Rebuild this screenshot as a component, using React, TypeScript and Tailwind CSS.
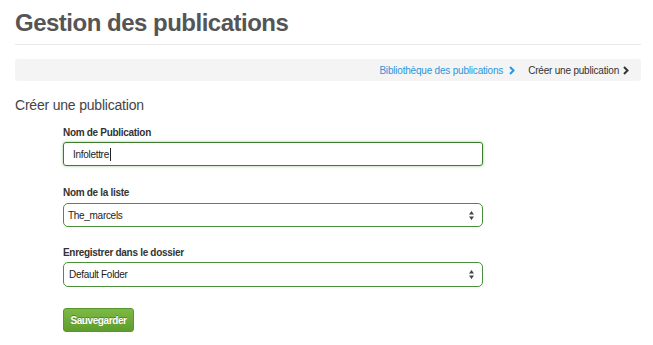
export default function App() {
  return (
    <div className="min-h-screen bg-white font-['Liberation_Sans',Arial,sans-serif] text-[#333]">
      <div className="px-[15px] pt-[6px]">
        <h1 className="text-[24px] font-bold leading-[34px] tracking-[-0.5px] text-[#555]">Gestion des publications</h1>
        <div className="mt-[4px] h-px w-[626px] bg-[#e8e8e8]" />

        <div className="mt-[14px] flex h-[22px] w-[626px] items-center justify-end rounded-[3px] bg-[#f4f4f4] pr-[12px] text-[10px] tracking-[-0.2px]">
          <span className="text-[#2a96dc]">Bibliothèque des publications</span>
          <svg className="ml-[6px] mr-[13px]" width="6" height="9" viewBox="0 0 6 9">
            <path d="M1 1l3.5 3.5L1 8" fill="none" stroke="#2a96dc" strokeWidth="2" />
          </svg>
          <span className="text-[#333]">Créer une publication</span>
          <svg className="ml-[4px]" width="6" height="9" viewBox="0 0 6 9">
            <path d="M1 1l3.5 3.5L1 8" fill="none" stroke="#333" strokeWidth="2" />
          </svg>
        </div>

        <h2 className="mt-[15px] text-[14px] leading-[18px] tracking-[-0.2px] text-[#444]">Créer une publication</h2>

        <form className="ml-[48px] mt-[12px] w-[420px] text-[10px] tracking-[-0.3px]">
          <label className="block font-bold leading-[14px] text-[#333]">Nom de Publication</label>
          <div className="mt-[2px] flex h-[24px] items-center rounded-[3px] border border-[#3d7a30] pl-[9px] text-[#222] shadow-[0_0_3px_rgba(80,160,60,0.6)]">
            Infolettre<span className="ml-px h-[13px] w-px bg-[#222]" />
          </div>

          <label className="mt-[20px] block font-bold leading-[14px] text-[#333]">Nom de la liste</label>
          <div className="mt-[3px] flex h-[24px] items-center justify-between rounded-[5px] border border-[#4a8f3a] pl-[4px] pr-[8px] text-[#222]">
            <span>The_marcels</span>
            <SelectArrows />
          </div>

          <label className="mt-[19px] block font-bold leading-[14px] text-[#333]">Enregistrer dans le dossier</label>
          <div className="mt-[2px] flex h-[25px] items-center justify-between rounded-[5px] border border-[#4a8f3a] pl-[5px] pr-[8px] text-[#222]">
            <span>Default Folder</span>
            <SelectArrows />
          </div>

          <button
            type="button"
            className="mt-[21px] h-[24px] w-[71px] rounded-[3px] border border-[#5a962e] bg-gradient-to-b from-[#7dba44] to-[#5e9c2d] text-[10px] font-bold tracking-[-0.4px] text-white [text-shadow:0_-1px_0_rgba(0,0,0,0.3)]"
          >
            Sauvegarder
          </button>
        </form>
      </div>
    </div>
  );
}

function SelectArrows() {
  return (
    <svg width="5" height="9" viewBox="0 0 5 9">
      <path d="M2.5 0L5 3.5H0z M2.5 9L0 5.5h5z" fill="#444" />
    </svg>
  );
}
